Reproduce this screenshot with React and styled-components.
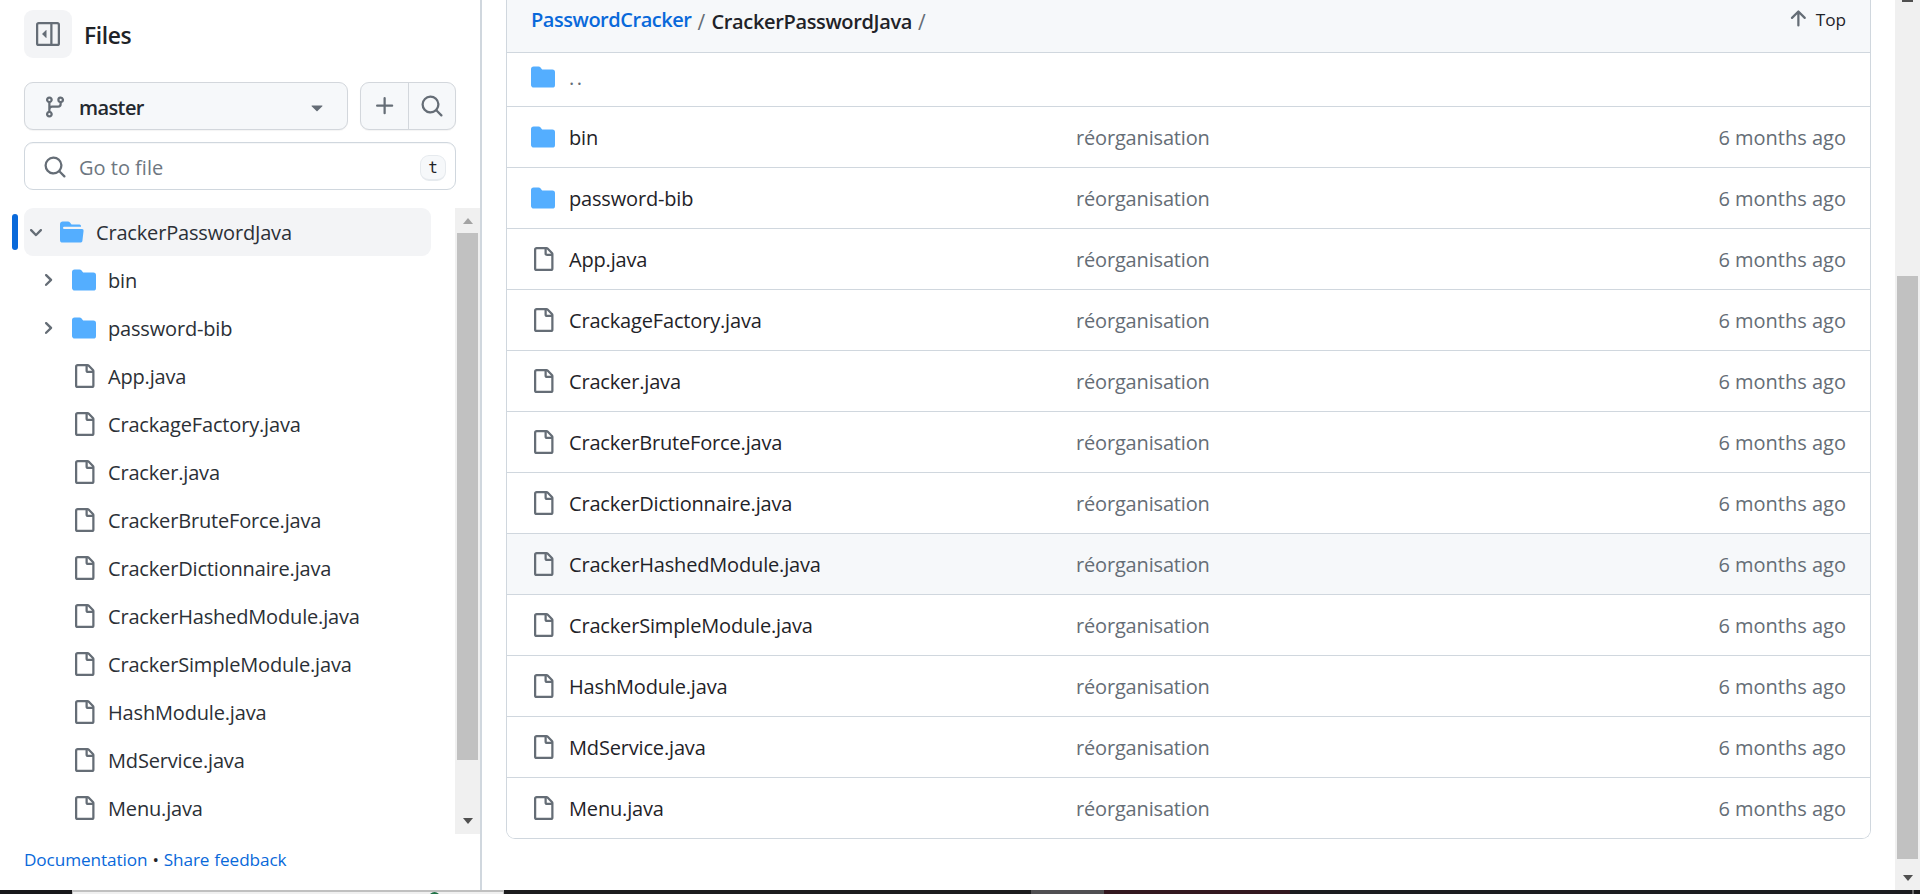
import React from 'react';
import styled, { createGlobalStyle, css } from 'styled-components';

const GlobalStyle = createGlobalStyle`
  * { box-sizing: border-box; }
  body {
    margin: 0;
    overflow: hidden;
    background: #fff;
    color: #1f2328;
    font-family: 'Open Sans', 'Noto Sans', sans-serif;
    font-size: 20px;
  }
`;

const paths = {
  folder: 'M1.75 1A1.75 1.75 0 0 0 0 2.75v10.5C0 14.216.784 15 1.75 15h12.5A1.75 1.75 0 0 0 16 13.25v-8.5A1.75 1.75 0 0 0 14.25 3H7.5a.25.25 0 0 1-.2-.1l-.9-1.2C6.07 1.26 5.55 1 5 1H1.75Z',
  folderOpen: 'M.513 1.513A1.75 1.75 0 0 1 1.75 1h3.5c.55 0 1.07.26 1.4.7l.9 1.2a.25.25 0 0 0 .2.1H13a1 1 0 0 1 1 1v.5H2.75a.75.75 0 0 0 0 1.5h11.978a1 1 0 0 1 .994 1.117L15 13.25A1.75 1.75 0 0 1 13.25 15H1.75A1.75 1.75 0 0 1 0 13.25V2.75c0-.464.184-.91.513-1.237Z',
  file: 'M2 1.75C2 .784 2.784 0 3.75 0h6.586c.464 0 .909.184 1.237.513l2.914 2.914c.329.328.513.773.513 1.237v9.586A1.75 1.75 0 0 1 13.25 16h-9.5A1.75 1.75 0 0 1 2 14.25Zm1.75-.25a.25.25 0 0 0-.25.25v12.5c0 .138.112.25.25.25h9.5a.25.25 0 0 0 .25-.25V6h-2.75A1.75 1.75 0 0 1 9 4.25V1.5Zm6.75.062V4.25c0 .138.112.25.25.25h2.688l-.011-.013-2.914-2.914-.013-.011Z',
  search: 'M10.68 11.74a6 6 0 0 1-7.922-8.982 6 6 0 0 1 8.982 7.922l3.04 3.04a.749.749 0 0 1-.326 1.275.749.749 0 0 1-.734-.215ZM11.5 7a4.499 4.499 0 1 0-8.997 0A4.499 4.499 0 0 0 11.5 7Z',
  plus: 'M7.75 2a.75.75 0 0 1 .75.75V7h4.25a.75.75 0 0 1 0 1.5H8.5v4.25a.75.75 0 0 1-1.5 0V8.5H2.75a.75.75 0 0 1 0-1.5H7V2.75A.75.75 0 0 1 7.75 2Z',
  branch: 'M9.5 3.25a2.25 2.25 0 1 1 3 2.122V6A2.5 2.5 0 0 1 10 8.5H6a1 1 0 0 0-1 1v1.128a2.251 2.251 0 1 1-1.5 0V5.372a2.25 2.25 0 1 1 1.5 0v1.836A2.493 2.493 0 0 1 6 7h4a1 1 0 0 0 1-1v-.628A2.25 2.25 0 0 1 9.5 3.25Zm-6 0a.75.75 0 1 0 1.5 0 .75.75 0 0 0-1.5 0Zm8.25-.75a.75.75 0 1 0 0 1.5.75.75 0 0 0 0-1.5ZM4.25 12a.75.75 0 1 0 0 1.5.75.75 0 0 0 0-1.5Z',
  triangle: 'm4.427 7.427 3.396 3.396a.25.25 0 0 0 .354 0l3.396-3.396A.25.25 0 0 0 11.396 7H4.604a.25.25 0 0 0-.177.427Z',
  chevronDown: 'M6 8.825c-.2 0-.4-.1-.5-.2l-3.3-3.3c-.3-.3-.3-.8 0-1.1.3-.3.8-.3 1.1 0l2.7 2.7 2.7-2.7c.3-.3.8-.3 1.1 0 .3.3.3.8 0 1.1l-3.2 3.2c-.2.2-.4.3-.6.3Z',
  chevronRight: 'M4.7 10c-.2 0-.4-.1-.5-.2-.3-.3-.3-.8 0-1.1L6.9 6 4.2 3.3c-.3-.3-.3-.8 0-1.1.3-.3.8-.3 1.1 0l3.3 3.2c.3.3.3.8 0 1.1L5.3 9.7c-.2.2-.4.3-.6.3Z',
  sidebar: 'm4.177 7.823 2.396-2.396A.25.25 0 0 1 7 5.604v4.792a.25.25 0 0 1-.427.177L4.177 8.177a.25.25 0 0 1 0-.354ZM0 1.75C0 .784.784 0 1.75 0h12.5C15.216 0 16 .784 16 1.75v12.5A1.75 1.75 0 0 1 14.25 16H1.75A1.75 1.75 0 0 1 0 14.25Zm1.75-.25a.25.25 0 0 0-.25.25v12.5c0 .138.112.25.25.25H9.5v-13Zm12.5 13a.25.25 0 0 0 .25-.25V1.75a.25.25 0 0 0-.25-.25H11v13Z',
  arrowUp: 'M3.47 7.78a.75.75 0 0 1 0-1.06l4.25-4.25a.75.75 0 0 1 1.06 0l4.25 4.25a.751.751 0 0 1-.018 1.042.751.751 0 0 1-1.042.018L9 4.81v7.44a.75.75 0 0 1-1.5 0V4.81L4.53 7.78a.75.75 0 0 1-1.06 0Z',
};

const Svg = styled.svg`
  flex: none;
  display: block;
  fill: ${(p) => p.$color};
`;

function Icon({ name, box = 16, color = '#656d76' }) {
  return (
    <Svg width={box * 1.5} height={box * 1.5} viewBox={`0 0 ${box} ${box}`} $color={color}>
      <path d={paths[name]} />
    </Svg>
  );
}

const Screen = styled.div`
  width: 1920px;
  height: 894px;
  display: flex;
  flex-direction: column;
  overflow: hidden;
`;

const Page = styled.div`
  display: flex;
  height: 890px;
`;

const Sidebar = styled.aside`
  width: 482px;
  flex: none;
  border-right: 2px solid #d0d7de;
  display: flex;
  flex-direction: column;
`;

const SidebarHeader = styled.div`
  display: flex;
  align-items: center;
  gap: 12px;
  height: 58px;
  padding: 10px 24px 0;
`;

const ToggleButton = styled.button`
  width: 48px;
  height: 48px;
  border: 0;
  border-radius: 9px;
  background: #f3f4f6;
  padding: 0 12px;
`;

const Title = styled.h2`
  margin: 0;
  padding-top: 3px;
  font-size: 22.8px;
  font-weight: 600;
  line-height: 45px;
  letter-spacing: -0.4px;
`;

const Controls = styled.div`
  display: flex;
  gap: 12px;
  padding: 24px 24px 0;
`;

const controlBox = css`
  height: 48px;
  border: 1px solid #d3d7dc;
  border-radius: 9px;
  background: #f6f8fa;
  box-shadow: 0 1px 1px rgba(31, 35, 40, 0.05);
`;

const BranchButton = styled.button`
  ${controlBox}
  width: 324px;
  display: flex;
  align-items: center;
  padding: 2px 18px 0;
  font: inherit;
  font-weight: 600;
  color: #24292f;
`;

const BranchName = styled.span`
  flex: 1;
  text-align: left;
  padding-left: 12px;
  letter-spacing: -0.6px;
`;

const ButtonGroup = styled.div`
  ${controlBox}
  width: 96px;
  display: flex;
`;

const GroupButton = styled.button`
  flex: 1;
  display: flex;
  align-items: center;
  justify-content: center;
  padding: 0 0 1px 1px;
  border: 0;
  background: none;

  & + & { border-left: 1px solid #d3d7dc; padding-left: 0; }
`;

const SearchField = styled.div`
  display: flex;
  align-items: center;
  height: 48px;
  margin: 12px 24px 0;
  padding: 2px 9px 0 18px;
  border: 1px solid #d0d7de;
  border-radius: 9px;
  box-shadow: inset 0 1px 0 rgba(208, 215, 222, 0.2);
`;

const Placeholder = styled.span`
  flex: 1;
  padding-left: 12px;
  color: #6e7781;
`;

const Key = styled.kbd`
  width: 26px;
  height: 26px;
  margin-top: 2px;
  border: 1px solid #e6eaee;
  border-bottom-width: 2px;
  border-radius: 9px;
  background: #f6f8fa;
  font: 16px/23px 'DejaVu Sans Mono', monospace;
  text-align: center;
`;

const TreeArea = styled.div`
  display: flex;
  height: 626px;
  margin-top: 18px;
`;

const Tree = styled.ul`
  flex: 1;
  margin: 0;
  padding: 0 24px 0 24px;
  list-style: none;
`;

const TreeItem = styled.li`
  position: relative;
  display: flex;
  align-items: center;
  height: 48px;
  padding-left: ${(p) => (p.$level ? 12 : 0)}px;
  border-radius: 9px;
  letter-spacing: -0.17px;
  ${(p) => p.$current && css`
    background: #f3f4f6;
    &::before {
      content: '';
      position: absolute;
      left: -12px;
      top: 6px;
      width: 6px;
      height: 36px;
      border-radius: 9px;
      background: #0969da;
    }
  `}
`;

const Twisty = styled.span`
  flex: none;
  display: flex;
  justify-content: center;
  width: 24px;
  margin-right: 12px;
`;

const TreeLabel = styled.span`
  padding-left: 12px;
  white-space: nowrap;
  color: #2b3036;
`;

const Footer = styled.div`
  padding: 12px 24px;
  font-size: 17.2px;
  line-height: 27px;
  letter-spacing: -0.1px;
  word-spacing: 0.6px;
`;

const Link = styled.a`
  color: #0969da;
`;

const Track = styled.div`
  width: 25px;
  flex: none;
  display: flex;
  flex-direction: column;
  align-items: center;
  background: #f0f0f0;
`;

const Thumb = styled.div`
  width: 21px;
  height: ${(p) => p.$height}px;
  background: #c1c1c1;
`;

const TrackEnd = styled.div`
  height: ${(p) => p.$height}px;
  flex: none;
  display: flex;
  flex-direction: column;
  justify-content: flex-end;
  padding-bottom: ${(p) => p.$bottom}px;
`;

const TrackArrow = styled.i`
  width: 0;
  height: 0;
  border: 5.5px solid transparent;
  border-width: ${(p) => (p.$up ? '0 5.5px 6px' : '6px 5.5px 0')};
  border-${(p) => (p.$up ? 'bottom' : 'top')}-color: ${(p) => (p.$up ? '#a3a3a3' : '#505050')};
`;

const ArrowStub = styled.i`
  width: 11px;
  height: 2px;
  background: #505050;
`;

const Main = styled.main`
  flex: 1;
  padding-left: 24px;
`;

const FileTable = styled.section`
  width: 1365px;
  border: 1px solid #d0d7de;
  border-top: 0;
  border-radius: 0 0 9px 9px;
  overflow: hidden;
`;

const TableHeader = styled.header`
  display: flex;
  justify-content: space-between;
  height: 52px;
  padding: 0 24px;
  background: #f6f8fa;
`;

const Breadcrumb = styled.nav`
  display: flex;
  gap: 6px;
  padding-top: 7px;
  line-height: 30px;
  font-weight: 600;
  letter-spacing: -0.36px;
`;

const RepoLink = styled.a`
  margin-top: -2px;
  height: 30px;
  color: #0969da;
  letter-spacing: -0.46px;
`;

const Slash = styled.span`
  width: 8px;
  font-weight: 400;
  font-size: 21px;
  color: #656d76;
`;

const TopButton = styled.button`
  display: flex;
  align-items: center;
  height: 24px;
  margin-top: 7px;
  padding: 0;
  gap: 6px;
  border: 0;
  background: none;
  font: 500 17.2px/27px 'Open Sans', sans-serif;
  letter-spacing: 0;
  color: #1f2328;
`;

const Row = styled.div`
  display: grid;
  grid-template-columns: 24px 521px 1fr auto;
  align-items: center;
  height: ${(p) => (p.$parent ? 54 : 61)}px;
  padding: 0 24px ${(p) => (p.$parent ? 5 : 0)}px;
  border-top: 1px solid #d0d7de;
  background: ${(p) => (p.$hover ? '#f6f8fa' : '#fff')};
`;

const FileName = styled.span`
  padding-left: 14px;
  letter-spacing: ${(p) => p.$tracking ?? -0.17}px;
`;

const Muted = styled.span`
  color: #656d76;
`;

const CommitMessage = styled(Muted)`
  letter-spacing: -0.17px;
`;

const Taskbar = styled.div`
  display: flex;
  height: 4px;
  background: #1c1c1e;
`;

const Strip = styled.div`
  width: ${(p) => p.$width}px;
  height: 4px;
  flex: none;
  background: ${(p) => p.$color};
`;

const Preview = styled.div`
  width: 432px;
  height: 4px;
  flex: none;
  padding-left: 356px;
  overflow: hidden;
  border: 1px solid #c0c0c0;
  border-width: 2px 1px 0;
  background: #f0f0f0;
`;

const Dot = styled.i`
  display: block;
  width: 11px;
  height: 11px;
  border-radius: 50%;
  background: #1d7044;
`;

const files = [
  { name: 'bin', dir: true },
  { name: 'password-bib', dir: true },
  { name: 'App.java' },
  { name: 'CrackageFactory.java' },
  { name: 'Cracker.java' },
  { name: 'CrackerBruteForce.java' },
  { name: 'CrackerDictionnaire.java' },
  { name: 'CrackerHashedModule.java', hover: true },
  { name: 'CrackerSimpleModule.java' },
  { name: 'HashModule.java' },
  { name: 'MdService.java' },
  { name: 'Menu.java' },
];

const FOLDER = '#54aeff';

export default function App() {
  return (
    <Screen>
      <GlobalStyle />
      <Page>
        <Sidebar>
          <SidebarHeader>
            <ToggleButton><Icon name="sidebar" /></ToggleButton>
            <Title>Files</Title>
          </SidebarHeader>
          <Controls>
            <BranchButton>
              <Icon name="branch" />
              <BranchName>master</BranchName>
              <Icon name="triangle" />
            </BranchButton>
            <ButtonGroup>
              <GroupButton><Icon name="plus" /></GroupButton>
              <GroupButton><Icon name="search" /></GroupButton>
            </ButtonGroup>
          </Controls>
          <SearchField>
            <Icon name="search" />
            <Placeholder>Go to file</Placeholder>
            <Key>t</Key>
          </SearchField>
          <TreeArea>
            <Tree>
              <TreeItem $current>
                <Twisty><Icon name="chevronDown" box={12} /></Twisty>
                <Icon name="folderOpen" color={FOLDER} />
                <TreeLabel>CrackerPasswordJava</TreeLabel>
              </TreeItem>
              {files.map((f) => (
                <TreeItem key={f.name} $level={1}>
                  <Twisty>{f.dir && <Icon name="chevronRight" box={12} />}</Twisty>
                  <Icon name={f.dir ? 'folder' : 'file'} color={f.dir ? FOLDER : undefined} />
                  <TreeLabel>{f.name}</TreeLabel>
                </TreeItem>
              ))}
            </Tree>
            <Track>
              <TrackEnd $height={25} $bottom={9}><TrackArrow $up /></TrackEnd>
              <Thumb $height={527} />
              <TrackEnd $height={74} $bottom={10}><TrackArrow /></TrackEnd>
            </Track>
          </TreeArea>
          <Footer>
            <Link>Documentation</Link> • <Link>Share feedback</Link>
          </Footer>
        </Sidebar>
        <Main>
          <FileTable>
            <TableHeader>
              <Breadcrumb>
                <RepoLink>PasswordCracker</RepoLink>
                <Slash>/</Slash>
                <span>CrackerPasswordJava</span>
                <Slash>/</Slash>
              </Breadcrumb>
              <TopButton><Icon name="arrowUp" />Top</TopButton>
            </TableHeader>
            <Row $parent>
              <Icon name="folder" color={FOLDER} />
              <FileName $tracking={2.4}><Muted>..</Muted></FileName>
            </Row>
            {files.map((f) => (
              <Row key={f.name} $hover={f.hover}>
                <Icon name={f.dir ? 'folder' : 'file'} color={f.dir ? FOLDER : undefined} />
                <FileName>{f.name}</FileName>
                <CommitMessage>réorganisation</CommitMessage>
                <Muted>6 months ago</Muted>
              </Row>
            ))}
          </FileTable>
        </Main>
        <Track>
          <ArrowStub />
          <TrackEnd $height={274} $bottom={0} />
          <Thumb $height={583} />
          <TrackEnd $height={31} $bottom={9}><TrackArrow /></TrackEnd>
        </Track>
      </Page>
      <Taskbar>
        <Strip $width={72} $color="#17171a" />
        <Preview><Dot /></Preview>
        <Strip $width={527} $color="#1c1c1e" />
        <Strip $width={73} $color="#504f52" />
        <Strip $width={186} $color="#33171f" />
        <Strip $width={622} $color="#1b1c20" />
        <Strip $width={2} $color="#6a6a6a" />
      </Taskbar>
    </Screen>
  );
}
